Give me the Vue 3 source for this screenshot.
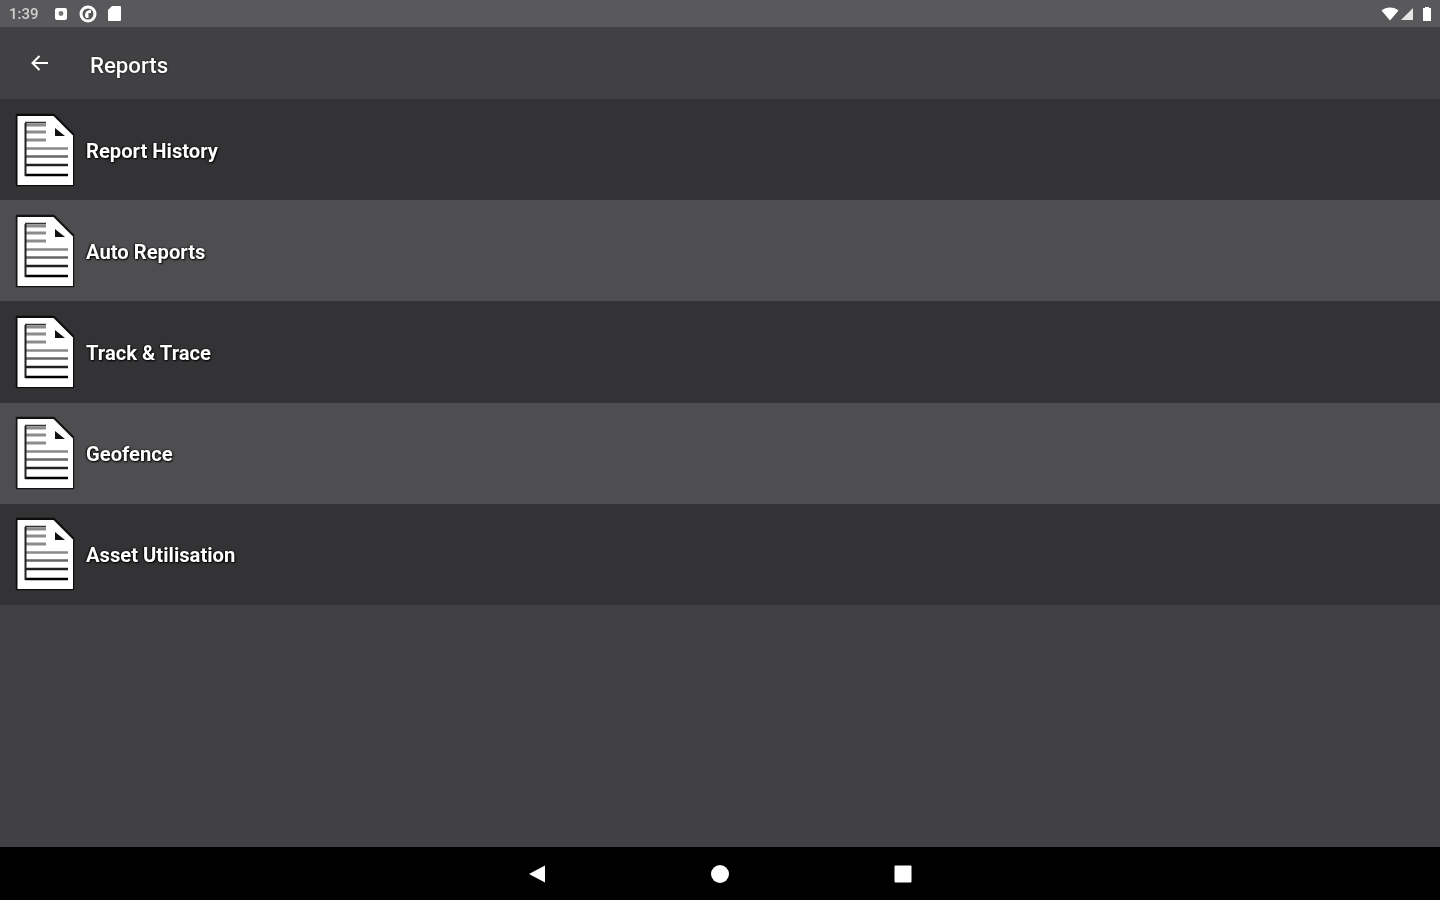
<script setup>
const reports = ['Report History', 'Auto Reports', 'Track & Trace', 'Geofence', 'Asset Utilisation']
</script>

<template>
  <div class="screen">
    <div class="status-bar">
      <div class="status-left">
        <span class="clock">1:39</span>
        <svg class="soft" width="14" height="14" viewBox="0 0 14 14">
          <rect x="1" y="1" width="12" height="12" rx="2" fill="#fff" />
          <circle cx="7" cy="6.500" r="2.400" fill="#77777a" />
        </svg>
        <svg class="circle-icon soft" width="20" height="20" viewBox="0 0 20 20">
          <circle cx="10" cy="10" r="7" fill="none" stroke="#fff" stroke-width="3" />
          <path d="M7 12 C7 8 9 6 13 6 L13 9 L10.500 9 L10.500 14 L8 14 Z" fill="#fff" />
        </svg>
        <svg class="card-icon soft" width="15" height="17" viewBox="0 0 15 17">
          <path d="M5 1 H13 A1 1 0 0 1 14 2 V15 A1 1 0 0 1 13 16 H2 A1 1 0 0 1 1 15 V5 Z" fill="#fff" />
        </svg>
      </div>
      <div class="status-right">
        <svg class="soft" width="18" height="14" viewBox="0 0 18 14">
          <path d="M0.500 3.500 C5 -0.500 13 -0.500 17.500 3.500 L9 13.500 Z" fill="#fff" />
        </svg>
        <svg class="signal soft" width="14" height="14" viewBox="0 0 14 14">
          <path d="M13 1 V13 H1 Z" fill="#fff" opacity="0.85" />
        </svg>
        <svg class="battery soft" width="10" height="16" viewBox="0 0 10 16">
          <path d="M3 1 H7 V2 H9 V15 H1 V2 H3 Z" fill="#fff" />
        </svg>
      </div>
    </div>

    <header class="toolbar">
      <svg class="back soft" width="24" height="24" viewBox="0 0 24 24">
        <path d="M20 12 H5 M11.500 5 L4.500 12 L11.500 19" fill="none" stroke="#fff" stroke-width="2" />
      </svg>
      <h1>Reports</h1>
    </header>

    <main class="list">
      <div v-for="name in reports" :key="name" class="row">
        <svg class="doc" width="62" height="74" viewBox="0 0 62 74">
          <!-- dark halo round the page -->
          <path d="M2.500 1.500 H40 L59.500 21 V72.500 H2.500 Z" fill="#000" stroke="#000" stroke-width="1.500" stroke-linejoin="round" opacity="0.75" />
          <path d="M3.500 3 H39.500 L59 22.500 V72 H3.500 Z" fill="#fff" />
          <!-- stripes, fainter towards the top -->
          <path d="M11 12 H32 M11 19 H32 M11 27 H32" stroke="#8c8c8c" stroke-width="3" />
          <path d="M11 35.500 H54" stroke="#8a8a8a" stroke-width="2.500" />
          <path d="M11 43.500 H54" stroke="#666" stroke-width="2.500" />
          <path d="M11 52 H54" stroke="#222" stroke-width="2.500" />
          <path d="M11 62 H54" stroke="#000" stroke-width="2.500" />
          <!-- left edge of the text block -->
          <path d="M11.500 10 V63" stroke="#222" stroke-width="2" fill="none" />
          <path d="M11 9.500 H32" stroke="#333" stroke-width="1.500" fill="none" />
          <!-- fold -->
          <path d="M41 15 L51 23 H41 Z" fill="#111" />
        </svg>
        <span class="label">{{ name }}</span>
      </div>
    </main>

    <nav class="nav-bar">
      <svg class="soft" width="20" height="20" viewBox="0 0 20 20"><path d="M2 10 L18 1.500 V18.500 Z" fill="#fff" /></svg>
      <svg class="soft" width="20" height="20" viewBox="0 0 20 20"><circle cx="10" cy="10" r="9" fill="#fff" /></svg>
      <svg class="soft" width="20" height="20" viewBox="0 0 20 20"><rect x="1.500" y="1.500" width="17" height="17" rx="1" fill="#fff" /></svg>
    </nav>
  </div>
</template>

<style>
html, body {
  margin: 0;
  background: #414143;
}
</style>

<style scoped>
.screen {
  width: 1440px;
  height: 900px;
  display: flex;
  flex-direction: column;
  overflow: hidden;
  background: #414143;
  font-family: Roboto, "Liberation Sans", sans-serif;
  color: #fff;
}

.soft {
  filter: blur(0.5px);
}

.status-bar {
  height: 27px;
  flex: none;
  display: flex;
  justify-content: space-between;
  align-items: center;
  padding: 0 8px 0 9px;
  background: #59595b;
}

.status-left {
  display: flex;
  align-items: center;
}

.clock {
  font-size: 15px;
  font-weight: 500;
  width: 45px;
  color: #d0d0d0;
  filter: blur(0.7px);
}

.circle-icon {
  margin-left: 10px;
}

.card-icon {
  margin-left: 9px;
}

.status-right {
  display: flex;
  align-items: center;
}

.signal {
  margin-left: 1px;
}

.battery {
  margin-left: 8px;
}

.toolbar {
  height: 72px;
  flex: none;
  display: flex;
  align-items: center;
  padding-left: 28px;
  background: #414143;
}

.toolbar h1 {
  margin: 4px 0 0 38px;
  font-size: 22.200px;
  font-weight: 500;
  text-shadow: 0 0 2px #000;
  filter: blur(0.5px);
}

.list {
  flex: 1;
}

.row {
  height: 101.200px;
  display: flex;
  align-items: center;
  padding-left: 14px;
  background: #333335;
}

.row:nth-child(even) {
  background: #4e4e50;
}

.doc {
  filter: blur(0.7px);
}

.label {
  margin-left: 10px;
  padding-top: 2px;
  font-size: 20.200px;
  font-weight: 700;
  text-shadow: 1px 1px 2px #000, -1px 0 2px #000;
  filter: blur(0.5px);
}

.nav-bar {
  height: 53px;
  flex: none;
  display: flex;
  justify-content: center;
  align-items: center;
  gap: 163px;
  background: #000;
}
</style>
